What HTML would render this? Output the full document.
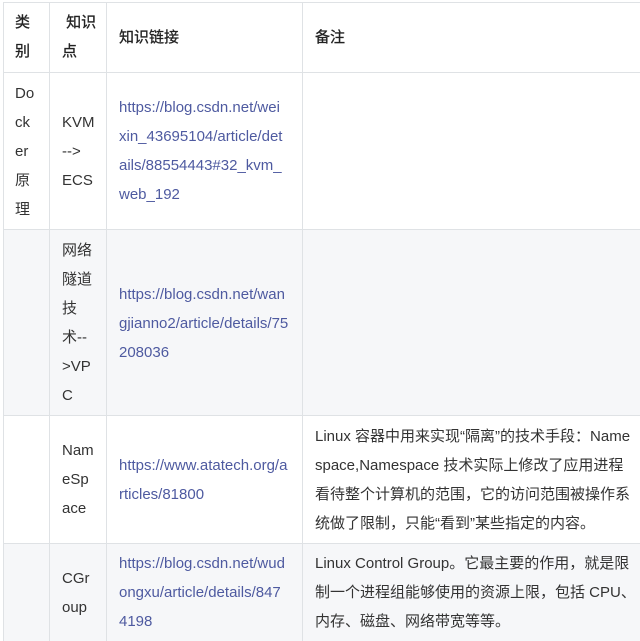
<!DOCTYPE html>
<html><head><meta charset="utf-8"><style>
body{margin:0;width:640px;height:641px;overflow:hidden;background:#fff;position:relative;font-family:"Liberation Sans","Noto Sans CJK SC",sans-serif;font-size:15px;color:#333}
.r{position:absolute;left:3px;right:0}
.g{background:#f6f7f9}
.h{position:absolute;left:3px;right:0;height:1px;background:#dfe2e5}
.v{position:absolute;top:2px;bottom:0;width:1px;background:#dfe2e5}
.t{position:absolute;line-height:29px;white-space:nowrap}
.a{color:#4e5aa0}
.b{color:#222;-webkit-text-stroke:0.3px #222}
</style></head><body>
<div class="r g" style="top:229px;height:186px"></div>
<div class="r g" style="top:543px;height:98px"></div>
<div class="h" style="top:2px"></div>
<div class="h" style="top:72px"></div>
<div class="h" style="top:229px"></div>
<div class="h" style="top:415px"></div>
<div class="h" style="top:543px"></div>
<div class="v" style="left:3px"></div>
<div class="v" style="left:49px"></div>
<div class="v" style="left:106px"></div>
<div class="v" style="left:302px"></div>

<div class="t b" style="left:15px;top:8px">类<br>别</div>
<div class="t b" style="left:62px;top:8px">&nbsp;知识<br>点</div>
<div class="t b" style="left:119px;top:23px">知识链接</div>
<div class="t b" style="left:315px;top:23px">备注</div>

<div class="t" style="left:15px;top:79px">Do<br>ck<br>er<br>原<br>理</div>
<div class="t" style="left:62px;top:108px">KVM<br>--&gt;<br>ECS</div>
<div class="t a" style="left:119px;top:93px">https://blog.csdn.net/wei<br>xin_43695104/article/det<br>ails/88554443#32_kvm_<br>web_192</div>

<div class="t" style="left:62px;top:236px">网络<br>隧道<br>技<br>术--<br>&gt;VP<br>C</div>
<div class="t a" style="left:119px;top:280px">https://blog.csdn.net/wan<br>gjianno2/article/details/75<br>208036</div>

<div class="t" style="left:62px;top:436px">Nam<br>eSp<br>ace</div>
<div class="t a" style="left:119px;top:451px">https://www.atatech.org/a<br>rticles/81800</div>
<div class="t" style="left:315px;top:422px">Linux 容器中用来实现“隔离”的技术手段：Name<br>space,Namespace 技术实际上修改了应用进程<br>看待整个计算机的范围，它的访问范围被操作系<br>统做了限制，只能“看到”某些指定的内容。</div>

<div class="t" style="left:62px;top:564px">CGr<br>oup</div>
<div class="t a" style="left:119px;top:549px">https://blog.csdn.net/wud<br>ongxu/article/details/847<br>4198</div>
<div class="t" style="left:315px;top:549px">Linux Control Group。它最主要的作用，就是限<br>制一个进程组能够使用的资源上限，包括 CPU、<br>内存、磁盘、网络带宽等等。</div>
</body></html>
